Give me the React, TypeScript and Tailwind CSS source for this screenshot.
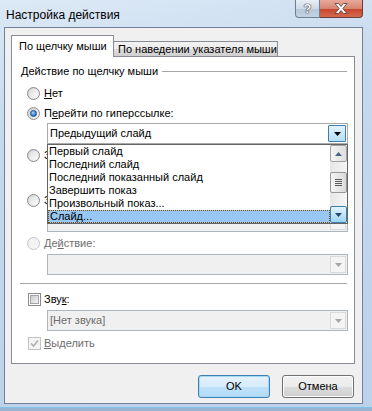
import React from 'react';

function Radio({ checked, disabled }: { checked?: boolean; disabled?: boolean }) {
  return (
    <div
      className={`w-[13px] h-[13px] shrink-0 rounded-full border flex items-center justify-center ${
        disabled
          ? 'border-[#c5c5c5] bg-[linear-gradient(135deg,#ececec,#fafafa)]'
          : 'border-[#8b8b8b] bg-[linear-gradient(135deg,#cfcfcf,#f8f8f8)]'
      }`}
    >
      {checked ? (
        <div className="w-[7px] h-[7px] rounded-full border border-[#1b4f8c] bg-[radial-gradient(circle_at_40%_35%,#a8d6f7,#2c73c4_70%)]" />
      ) : (
        <div className={`w-[9px] h-[9px] rounded-full ${disabled ? 'bg-[#f4f4f4]' : 'bg-[linear-gradient(135deg,#dcdcdc,#fdfdfd)]'}`} />
      )}
    </div>
  );
}

function Check({ checked, disabled }: { checked?: boolean; disabled?: boolean }) {
  return (
    <div
      className={`w-[13px] h-[13px] shrink-0 border flex items-center justify-center ${
        disabled ? 'border-[#c2c2c2] bg-[#f4f4f4]' : 'border-[#8b8b8b] bg-white'
      }`}
    >
      {checked ? (
        <svg width="9" height="9" viewBox="0 0 9 9">
          <path d="M1 4.5 L3.5 7 L8 1.5" fill="none" stroke="#b0b0b0" strokeWidth="1.6" />
        </svg>
      ) : (
        <div className="w-[9px] h-[9px] border border-[#a4a4a4] bg-[linear-gradient(135deg,#c9c9c9,#f4f4f4)]" />
      )}
    </div>
  );
}

function Arrow({ color, up }: { color: string; up?: boolean }) {
  return (
    <svg width="7" height="4" viewBox="0 0 7 4">
      <path d={up ? 'M0 4 L3.5 0 L7 4Z' : 'M0 0 L7 0 L3.5 4Z'} fill={color} />
    </svg>
  );
}

function Combo({ text, active }: { text?: string; active?: boolean }) {
  if (active) {
    return (
      <div className="h-[21px] border border-[#a9a9a9] bg-white flex items-center pl-[1px] pr-[1px]">
        <span className="flex-1 pl-[1px] text-black">{text}</span>
        <div className="w-[18px] h-[17px] border border-[#3c7fb1] rounded-[1px] bg-[linear-gradient(180deg,#e2f2fc,#b6def6)] flex items-center justify-center">
          <Arrow color="#000" />
        </div>
      </div>
    );
  }
  return (
    <div className="h-[21px] border border-[#adb5bd] bg-[#f0f0f0] flex items-center pl-[1px] pr-[1px]">
      <span className="flex-1 pl-[1px] text-[#6d6d6d]">{text}</span>
      <div className="w-[16px] h-[17px] border border-[#dadada] bg-[#f4f4f4] flex items-center justify-center">
        <Arrow color="#a6a6a6" />
      </div>
    </div>
  );
}

function ScrollBtn({ up, hot }: { up?: boolean; hot?: boolean }) {
  return (
    <div
      className={`w-[17px] h-[17px] rounded-[2px] border flex items-center justify-center ${
        hot
          ? 'border-[#3c7fb1] bg-[linear-gradient(180deg,#e5f4fc,#9fd4f2)]'
          : 'border-[#a3a3a3] bg-[linear-gradient(90deg,#f4f4f4,#dedede)]'
      }`}
    >
      <Arrow color={hot ? '#1d4c74' : '#4d6185'} up={up} />
    </div>
  );
}

function Scrollbar() {
  return (
    <div className="w-[17px] flex flex-col bg-[linear-gradient(90deg,#e6e6e6,#f6f6f6)]">
      <ScrollBtn up />
      <div className="mt-[10px] w-[17px] h-[21px] rounded-[2px] border border-[#979797] bg-[linear-gradient(90deg,#f4f4f4,#dadada)] flex flex-col items-center justify-center gap-[1px]">
        <div className="w-[7px] h-px bg-[#5c5c5c]" />
        <div className="w-[7px] h-px bg-[#5c5c5c]" />
        <div className="w-[7px] h-px bg-[#5c5c5c]" />
        <div className="w-[7px] h-px bg-[#5c5c5c]" />
      </div>
      <div className="flex-1" />
      <ScrollBtn hot />
    </div>
  );
}

const items = [
  'Первый слайд',
  'Последний слайд',
  'Последний показанный слайд',
  'Завершить показ',
  'Произвольный показ...',
];

export default function App() {
  return (
    <div className="w-[372px] h-[411px] overflow-hidden bg-[#98b4d2] font-['Liberation_Sans',Arial,sans-serif] text-[11px] leading-[13px] text-black">
      <div className="w-[372px] h-[408px] bg-[linear-gradient(170deg,#dce9f6_0%,#c5d8ed_30%,#bcd2ea_100%)] flex flex-col border-b border-[#7fc4e6]">
        {/* title bar */}
        <div className="h-[27px] flex items-start">
          <span className="ml-[6px] mt-[8px] text-[12px] leading-[14px]">Настройка действия</span>
          <div className="ml-auto mr-[9px] flex">
            <div className="w-[25px] h-[18px] rounded-bl-[4px] border border-t-0 border-[#6d7f95] bg-[linear-gradient(180deg,#e8eef6_0%,#cfdae7_50%,#b7c6d8_51%,#c4d3e3_100%)] flex items-center justify-center">
              <span className="text-white font-bold text-[13px] leading-[13px] [text-shadow:0_0_1px_#333,0_0_1px_#333,0_0_1px_#333]">?</span>
            </div>
            <div className="w-[43px] h-[18px] rounded-br-[4px] border border-t-0 border-l-0 border-[#6e3b36] bg-[linear-gradient(180deg,#e9a99c_0%,#d88570_50%,#c6432c_51%,#d46a4f_100%)] flex items-center justify-center">
              <svg width="14" height="11" viewBox="0 0 14 11">
                <path
                  d="M1 0.5h3.5l2.5 3 2.5-3h3.5l-4.2 5 4.2 5h-3.5l-2.5-3-2.5 3h-3.5l4.2-5z"
                  fill="#fff"
                  stroke="#4a3a38"
                  strokeWidth="0.8"
                />
              </svg>
            </div>
          </div>
        </div>

        {/* client area */}
        <div className="ml-[4px] w-[359px] h-[377px] border border-[#6f829a] bg-[#f0f0f0] flex flex-col">
          {/* tabs */}
          <div className="mt-[7px] ml-[6px] flex items-end h-[21px] relative z-10 whitespace-nowrap">
            <div className="w-[103px] h-[22px] -mb-px border border-b-0 border-[#898c95] bg-white flex items-center pl-[7px]">
              По щелчку мыши
            </div>
            <div className="w-[165px] h-[15px] -ml-px border border-b-0 border-[#898c95] bg-[linear-gradient(180deg,#f2f2f2_0%,#ebebeb_50%,#dddddd_51%,#cfcfcf_100%)] flex items-center pl-[4px]">
              По наведении указателя мыши
            </div>
          </div>

          {/* tab panel */}
          <div className="ml-[6px] w-[344px] h-[308px] border border-[#898c95] bg-white flex flex-col">
            <div className="mt-[7px] h-[14px] flex items-center pl-[9px] pr-[7px]">
              <span>Действие по щелчку мыши</span>
              <div className="ml-[4px] flex-1 h-px bg-[#a6a6a6]" />
            </div>

            <div className="mt-[7px] h-[16px] flex items-center pl-[15px] gap-[4px]">
              <Radio />
              <span><span className="underline">Н</span>ет</span>
            </div>

            <div className="mt-[4px] h-[16px] flex items-center pl-[15px] gap-[4px]">
              <Radio checked />
              <span>П<span className="underline">е</span>рейти по гиперссылке:</span>
            </div>

            <div className="mt-[2px] ml-[35px] mr-[6px]">
              <Combo text="Предыдущий слайд" active />
            </div>

            {/* area hidden under the open list */}
            <div className="relative">
              <div className="mt-[3px] h-[16px] flex items-center pl-[15px] gap-[4px]">
                <Radio />
                <span className="w-[4px] overflow-hidden">З</span>
              </div>
              <div className="mt-[4px] ml-[35px] mr-[6px] h-[21px]" />
              <div className="mt-[4px] h-[16px] flex items-center pl-[15px] gap-[4px]">
                <Radio />
                <span className="w-[4px] overflow-hidden">З</span>
              </div>
              <div className="mt-[3px] ml-[35px] mr-[6px]">
                <Combo />
              </div>

              {/* dropdown list */}
              <div className="absolute left-[35px] top-0 w-[301px] h-[80px] border border-[#646464] bg-white flex">
                <div className="flex-1 flex flex-col">
                  {items.map((t) => (
                    <div key={t} className="h-[13px] leading-[13px] pl-[1px] whitespace-nowrap">{t}</div>
                  ))}
                  <div className="h-[13px] leading-[11px] pl-[1px] bg-[#97c7f2] border border-dotted border-[#7a4a10]">Слайд...</div>
                </div>
                <Scrollbar />
              </div>
            </div>

            <div className="mt-[3px] h-[16px] flex items-center pl-[15px] gap-[4px] text-[#6d6d6d]">
              <Radio disabled />
              <span>Де<span className="underline">й</span>ствие:</span>
            </div>
            <div className="mt-[3px] ml-[35px] mr-[6px]">
              <Combo />
            </div>

            <div className="mt-[8px] ml-[8px] mr-[7px] h-px bg-[#a6a6a6]" />

            <div className="mt-[7px] h-[16px] flex items-center pl-[16px] gap-[3px]">
              <Check />
              <span>Зву<span className="underline">к</span>:</span>
            </div>
            <div className="mt-[3px] ml-[35px] mr-[6px]">
              <Combo text="[Нет звука]" />
            </div>

            <div className="mt-[4px] h-[16px] flex items-center pl-[16px] gap-[3px] text-[#6d6d6d]">
              <Check checked disabled />
              <span><span className="underline">В</span>ыделить</span>
            </div>
          </div>

          {/* buttons */}
          <div className="mt-[11px] mr-[8px] flex justify-end gap-[12px]">
            <button className="w-[72px] h-[23px] rounded-[3px] border border-[#3c7fb1] bg-[linear-gradient(180deg,#e5f2fc_0%,#d6ebfb_50%,#bfe1f8_51%,#b3daf6_100%)] shadow-[inset_0_0_0_1px_#a4d8f6] text-black">
              OK
            </button>
            <button className="w-[72px] h-[23px] rounded-[3px] border border-[#707070] bg-[linear-gradient(180deg,#f2f2f2_0%,#ebebeb_50%,#dddddd_51%,#cfcfcf_100%)] shadow-[inset_0_0_0_1px_#fcfcfc] text-black">
              Отмена
            </button>
          </div>
        </div>
      </div>
    </div>
  );
}
